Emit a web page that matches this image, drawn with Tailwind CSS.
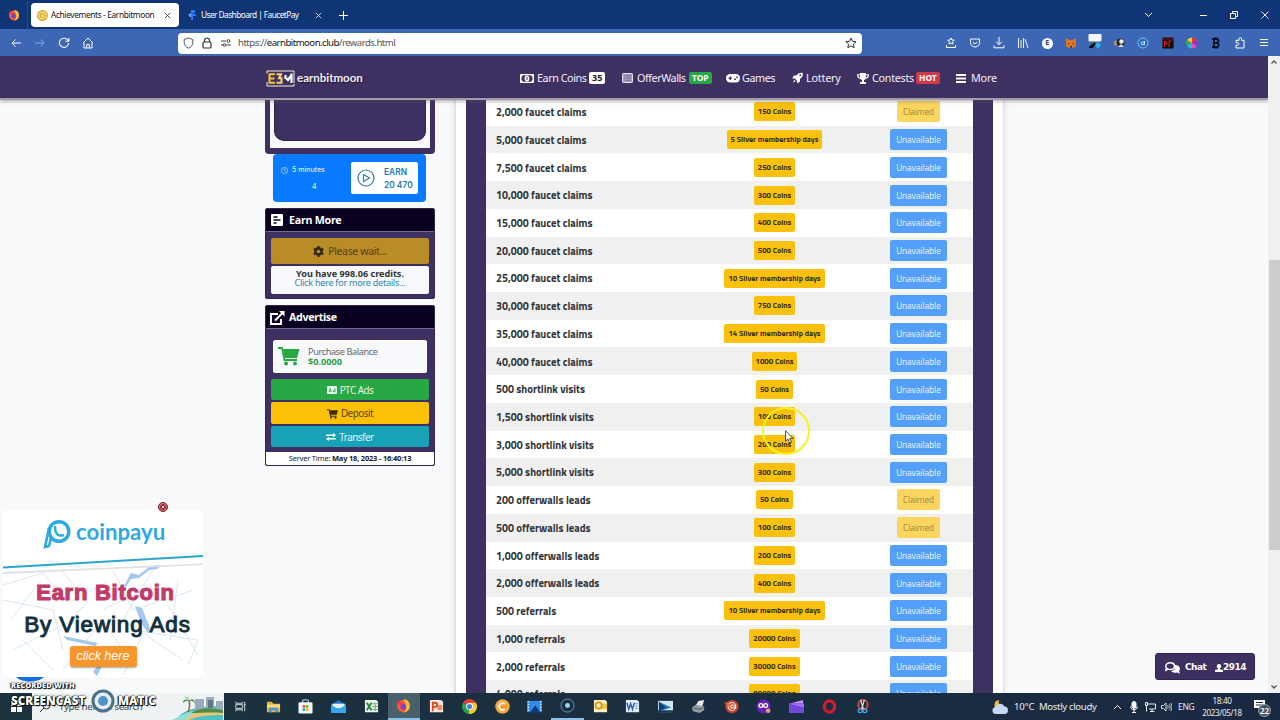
<!DOCTYPE html>
<html lang="en">
<head>
    <meta charset="UTF-8">
    <meta name="viewport" content="width=device-width, initial-scale=1.0">
    <title>Achievements - Earnbitmoon</title>
    <script src="https://cdn.jsdelivr.net/npm/@tailwindcss/browser@4"></script>
</head>
<body class="w-[1280px] h-[720px] overflow-hidden flex flex-col relative font-['Noto_Sans',sans-serif] text-[#333] bg-[#f8f9fb]">

    <!-- Tab bar -->
    <div class="h-[29px] shrink-0 bg-[#103577] flex items-center pt-px text-white text-[8.3px]">
        <div class="w-[28px] h-full border-r border-[#2b4b86] flex items-center justify-center">
            <svg class="w-3 h-3" viewBox="0 0 24 24"><circle cx="12" cy="13" r="10" fill="#ff5a36"/><path d="M12 3c5-3 11 4 10 11-1 5-5 9-10 9 6-4 6-12 0-20z" fill="#ffbd3e"/><path d="M2 9l2-5 4 3 6 2-3 3z" fill="#f53a50"/><circle cx="11.500" cy="14" r="4.500" fill="#7047c6"/></svg>
        </div>
        <div class="ml-[3px] w-[148px] h-6 bg-white rounded-sm flex items-center text-[#15141a] pl-1.5">
            <svg class="w-[11px] h-[11px]" viewBox="0 0 12 12"><circle cx="6" cy="6" r="6" fill="#d9b13b"/><circle cx="6" cy="6" r="3.800" fill="none" stroke="#fbe9a0"/><path d="M5 4h2v4H5z" fill="#f6df8e"/></svg>
            <span class="ml-[3px] w-[105px] whitespace-nowrap tracking-[-0.35px]">Achievements - Earnbitmoon</span>
            <svg class="ml-2 w-[7px] h-[7px] shrink-0" viewBox="0 0 8 8" stroke="#333" fill="none"><path d="M1 1l6 6M7 1L1 7"/></svg>
        </div>
        <svg class="ml-[9px] w-[9px] h-[10px]" viewBox="0 0 9 10"><path d="M3 0h4v3H5v1h3v2H5v4H3V7H1V4h2z" fill="#2b78f5"/><path d="M0 5l3-2v4z" fill="#60a5ff"/></svg>
        <span class="ml-[4px] w-[98px] whitespace-nowrap tracking-[-0.55px]">User Dashboard | FaucetPay</span>
        <svg class="ml-[16px] w-[7px] h-[7px]" viewBox="0 0 8 8" stroke="#dfe8fa" fill="none"><path d="M1 1l6 6M7 1L1 7"/></svg>
        <svg class="ml-[17px] w-[9px] h-[9px]" viewBox="0 0 9 9" stroke="#fff" fill="none"><path d="M4.500 0v9M0 4.500h9"/></svg>
        <div class="ml-auto flex items-center">
            <svg class="w-[9px] h-[6px] mr-[47px]" viewBox="0 0 9 6" stroke="#fff" fill="none"><path d="M1 1l3.500 3.500L8 1"/></svg>
            <svg class="w-[7px] h-[7px] mr-[23px]" viewBox="0 0 7 7" stroke="#fff" fill="none"><path d="M0 3.500h7"/></svg>
            <svg class="w-[8px] h-[8px] mr-[23px]" viewBox="0 0 8 8" stroke="#fff" fill="none"><path d="M.5 2.500h5v5h-5zM2.500 2V.5h5v5H6"/></svg>
            <svg class="w-[8px] h-[8px] mr-[11px]" viewBox="0 0 8 8" stroke="#fff" fill="none" stroke-width=".9"><path d="M.5.5l7 7M7.500.5l-7 7"/></svg>
        </div>
    </div>

    <!-- Address bar -->
    <div class="h-[27px] shrink-0 bg-[#3d66b4] flex items-center pt-px">
        <svg class="ml-[10px] w-3 h-3" viewBox="0 0 12 12" stroke="#fff" fill="none"><path d="M11 6H2M5.500 2.500L2 6l3.500 3.500"/></svg>
        <svg class="ml-[12px] w-3 h-3" viewBox="0 0 12 12" stroke="#8aa6da" fill="none"><path d="M1 6h9M6.500 2.500L10 6 6.500 9.500"/></svg>
        <svg class="ml-[12px] w-3 h-3" viewBox="0 0 12 12" stroke="#fff" fill="none" stroke-width="1.100"><path d="M10 3.500A4.600 4.600 0 1 0 10.600 6M10.800 1v3.300H7.500"/></svg>
        <svg class="ml-[12px] w-3 h-3" viewBox="0 0 12 12" stroke="#fff" fill="none"><path d="M1 6l5-5 5 5M2 5.500V11h8V5.500M4.700 11V7.500h2.600V11"/></svg>
        <div class="ml-[84px] w-[684px] h-[21px] bg-white rounded-sm flex items-center text-[9.6px] text-[#555]">
            <svg class="ml-[5px] w-[11px] h-[12px]" viewBox="0 0 11 12" stroke="#555" fill="none"><path d="M5.500 1l4.300 1.500v3c0 2.700-1.700 4.500-4.300 5.700C2.900 10 1.200 8.200 1.200 5.500v-3z"/></svg>
            <svg class="ml-[8px] w-[10px] h-[12px]" viewBox="0 0 10 12" stroke="#333" fill="none" stroke-width="1.200"><rect x="1" y="5" width="8" height="6" rx="1"/><path d="M2.500 5V3.500a2.500 2.500 0 0 1 5 0V5"/></svg>
            <svg class="ml-[9px] w-[10px] h-[8px]" viewBox="0 0 10 8" stroke="#444" fill="none"><path d="M0 2h5M5 6h5M0 6h2"/><circle cx="7.500" cy="2" r="1.400"/><circle cx="3.300" cy="6" r="1.300"/></svg>
            <span class="ml-[7px] pt-px whitespace-nowrap tracking-[-0.53px]">https://<span class="text-[#111]">earnbitmoon.club</span>/rewards.html</span>
            <svg class="ml-auto mr-[5px] w-[12px] h-[12px]" viewBox="0 0 12 12" stroke="#333" fill="none"><path d="M6 1l1.500 3.300 3.600.4-2.700 2.400.8 3.600L6 8.900l-3.200 1.800.8-3.600L.9 4.700l3.600-.4z"/></svg>
        </div>
        <div class="ml-auto mr-1 flex [&>div]:w-[24.1px] [&>div]:flex [&>div]:items-center [&>div]:justify-center [&_svg]:w-3 [&_svg]:h-3">
            <div><svg viewBox="0 0 12 12" stroke="#fff" fill="none"><path d="M6 1l1 2 2.300.3-1.700 1.500.4 2.200-2-1-2 1 .4-2.200-1.700-1.500L5 3zM1.500 8v2.500h9V8"/></svg></div>
            <div><svg viewBox="0 0 12 12" stroke="#fff" fill="none"><path d="M1.500 2h9v3.500a4.500 4.500 0 0 1-9 0zM3.800 5L6 7l2.200-2"/></svg></div>
            <div><svg viewBox="0 0 12 12" stroke="#fff" fill="none"><path d="M6 0v7.500M3 4.700l3 3 3-3M1 8.500v2.300h10V8.500"/></svg></div>
            <div><svg viewBox="0 0 12 12" stroke="#fff" fill="none" stroke-width=".9"><path d="M1.500 1v10M4 3v8M6.500 1v10M8 2l3 9"/></svg></div>
            <div><span class="w-[11px] h-[11px] rounded-full bg-white text-[#345] text-[7px] font-bold flex items-center justify-center">E</span></div>
            <div><svg viewBox="0 0 12 12"><path d="M.5 1l4 2h3l4-2-.8 5 .5 3-2.700 2-1.500-.8H5l-1.500.8L.8 9l.5-3z" fill="#e1772b"/><path d="M3 6l2 1-1.500.8zM9 6L7 7l1.500.8zM5 9h2v1.500H5z" fill="#5b3022"/></svg></div>
            <div><svg class="overflow-visible" viewBox="0 0 12 12"><rect x="-.5" y="-3" width="13" height="7.500" rx="1" fill="#f5f7fb"/><path d="M0 10l5-5 2 2-3 4H0z" fill="#111"/><path d="M2 4.500h3L4 7z" fill="#35a83a"/><path d="M6 8l3-3 3 3-3 4z" fill="#23b7ea"/></svg></div>
            <div><svg viewBox="0 0 12 12"><circle cx="3.500" cy="6" r="2.600" fill="#b59b6f"/><circle cx="7.500" cy="5.500" r="4" fill="#2b2b2f"/><circle cx="8.500" cy="4.500" r="2.200" fill="#eee"/><path d="M5 10l3-3 3 3z" fill="#ddd"/></svg></div>
            <div><svg viewBox="0 0 12 12" fill="none" stroke="#6cc2ff"><circle cx="6" cy="6" r="5"/><circle cx="6" cy="6" r="3.300" fill="#1c67c9" stroke="none"/><circle cx="5.700" cy="6.300" r="1.500" stroke="#fff" stroke-width=".8"/><path d="M7.500 4v4" stroke="#fff" stroke-width=".8"/></svg></div>
            <div><svg viewBox="0 0 12 12"><rect x=".5" y=".5" width="11" height="11" fill="#170808"/><path d="M2.500 10V4l2.500 1v2H3M7 10V4h2.500" stroke="#e2261f" fill="none"/><path d="M1 2h10" stroke="#a11" stroke-width=".7"/></svg></div>
            <div><svg viewBox="0 0 12 12"><path d="M6 6V.5A5.500 5.500 0 0 1 10.800 3z" fill="#e33"/><path d="M6 6l4.800-3a5.500 5.500 0 0 1 0 6z" fill="#a02bd0"/><path d="M6 6l4.800 3A5.500 5.500 0 0 1 6 11.500z" fill="#e94bbd"/><path d="M6 6v5.500A5.500 5.500 0 0 1 1.200 9z" fill="#25b7f0"/><path d="M6 6L1.200 9a5.500 5.500 0 0 1 0-6z" fill="#31b53b"/><path d="M6 6L1.200 3A5.500 5.500 0 0 1 6 .5z" fill="#f1cf24"/></svg></div>
            <div><svg viewBox="0 0 12 12" fill="none" stroke="#0b1222" stroke-width="1.800"><path d="M2 2h4.500a1.900 1.900 0 0 1 0 3.800H4M6.500 5.800a2.100 2.100 0 0 1 0 4.200H2M4 2v8"/><path d="M5 0v2M7 0v2M5 10v2M7 10v2" stroke-width="1"/></svg></div>
            <div><svg viewBox="0 0 12 12" fill="none" stroke="#fff"><path d="M2 11V8h1.500a1.200 1.200 0 0 0 0-2.400H2V3.300h3V2a1.300 1.300 0 0 1 2.600 0v1.300H10V11z"/></svg></div>
            <div><svg viewBox="0 0 12 12" fill="none" stroke="#fff"><path d="M2 2.500h8M2 5.500h8M2 8.500h8"/></svg></div>
        </div>
    </div>

    <!-- Page -->
    <div class="h-[637px] shrink-0 flex relative">
        <div class="w-[1268px] flex flex-col overflow-hidden">
            <nav class="h-[42px] pt-[2px] shrink-0 bg-[#3f3062] shadow-[0_2px_0_#a29ba8,0_3px_4px_#5558] relative z-10 flex items-center text-[10.8px] tracking-[-0.45px] text-[#f3effa] pl-[266px] whitespace-nowrap">
                <svg class="w-[29px] h-[17px]" viewBox="0 0 29 17" fill="none"><path d="M1 3.500V1h27v12M1 12v4h27v-2" stroke="#f4efe0"/><path d="M9 4.200H3.500v8.600H9M3.500 8.500h5" stroke="#f8c33c" stroke-width="2"/><path d="M10.500 4.200H15L13 8.300h2.500v4.500h-5" stroke="#f8d46c" stroke-width="2"/><path d="M19.500 5v4M25.500 3.500V13M19 7l3 3 4-6" stroke="#fff" stroke-width="2.200"/></svg>
                <span class="ml-[2px] w-[66px] font-['Lato',sans-serif] font-bold text-[11.5px] tracking-[0px] [text-shadow:1px_1px_1px_#0008]">earnbitmoon</span>
                <div class="ml-[157px] w-[102px] flex items-center">
                    <svg class="w-[14px] h-[9px] mr-[3px]" viewBox="0 0 14 9"><rect width="14" height="9" rx=".8" fill="#fff"/><path d="M3 1.200h8L12.500 3v3L11 7.800H3L1.500 6V3z" fill="#3f3062"/><ellipse cx="7" cy="4.500" rx="2.400" ry="3" fill="#fff"/><path d="M7 3v3" stroke="#3f3062"/></svg>
                    <span class="w-[49px]">Earn Coins</span><span class="ml-[3px] h-[12px] px-[3px] rounded-[2px] bg-white text-[#222] text-[9px] font-bold tracking-normal leading-[12px]">35</span>
                </div>
                <div class="w-[104px] flex items-center">
                    <svg class="w-[11px] h-[10px] mr-[4px]" viewBox="0 0 11 10"><rect x=".5" y=".5" width="10" height="9" rx=".8" fill="#a69db9" stroke="#e6e1ee"/><path d="M2 2.700h1M4 2.700h5M2 5h1M4 5h5M2 7.300h1M4 7.300h5" stroke="#6c5f88" stroke-width=".8"/></svg>
                    <span class="w-[49px]">OfferWalls</span><span class="ml-[3px] h-[12px] px-[3px] rounded-[2px] bg-[#28a745] text-white text-[8.4px] font-bold tracking-normal leading-[12px]">TOP</span>
                </div>
                <div class="w-[66px] flex items-center">
                    <svg class="w-[14px] h-[9px] mr-[2px]" viewBox="0 0 14 9"><rect width="14" height="8.500" rx="4.200" fill="#fff"/><path d="M2.500 4.200h3.600M4.300 2.400V6" stroke="#3f3062" stroke-width="1.200"/><circle cx="9" cy="5.200" r=".9" fill="#3f3062"/><circle cx="11" cy="3.300" r=".9" fill="#3f3062"/></svg>
                    <span>Games</span>
                </div>
                <div class="w-[65px] flex items-center">
                    <svg class="w-[11px] h-[12px] mr-[3px]" viewBox="0 0 12 12" fill="#fff"><path d="M11.700.3C8.500-.2 6.300 1 4.800 3.400H2L.3 6.500l2.800.1 2.400 2.400.1 2.700L8.700 10V7.200C11 5.700 12.200 3.500 11.700.3z"/><circle cx="9" cy="3" r="1" fill="#3f3062"/><path d="M2.500 8L1 11l3-1.500z"/></svg>
                    <span class="tracking-[-0.2px]">Lottery</span>
                </div>
                <div class="w-[99px] flex items-center">
                    <svg class="w-[12px] h-[11px] mr-[3px]" viewBox="0 0 12 11" fill="#fff"><path d="M3 0h6v1.200h3c0 3-1.200 4.500-3.500 4.700C8 6.600 7.500 7 7 7.200V9h2v2H3V9h2V7.200C4.500 7 4 6.600 3.500 5.900 1.200 5.700 0 4.200 0 1.200h3zM1.200 2.300c.2 1.300.8 2 1.900 2.300L2.900 2.300zM10.800 2.300H9.100l-.2 2.300c1.100-.3 1.700-1 1.900-2.300z" fill-rule="evenodd"/></svg>
                    <span class="w-[41px] tracking-[-0.3px]">Contests</span><span class="ml-[3px] h-[12px] px-[3px] rounded-[2px] bg-[#d13a4b] text-white text-[8.4px] font-bold tracking-normal leading-[12px]">HOT</span>
                </div>
                <svg class="w-[10px] h-[9px] mr-[5px]" viewBox="0 0 10 9" stroke="#fff" stroke-width="1.800"><path d="M0 1h10M0 4.500h10M0 8h10"/></svg>
                <span class="tracking-[-0.2px]">More</span>
            </nav>

            <div class="flex-1 min-h-0 flex pl-[265px]">
                <!-- Sidebar -->
                <aside class="w-[170px] shrink-0 flex flex-col">
                    <div class="h-[56px] shrink-0 bg-[#3f3062] px-[5px] pb-[6px] rounded-b-sm">
                        <div class="h-full bg-[#f8f8fc] px-1 pb-[7px]"><div class="h-full bg-[#3f3062] rounded-b-[10px] border border-t-0 border-[#30224f]"></div></div>
                    </div>
                    <div class="h-12 shrink-0 mx-2 w-[153px] bg-[#087aff] rounded-[4px] flex font-['Inter',sans-serif] text-[7px] font-medium text-[#d9ebff]">
                        <div class="w-[78px] pt-[11px] pl-2">
                            <div class="flex items-center gap-[4px] whitespace-nowrap"><svg class="w-[7px] h-[7px]" viewBox="0 0 8 8" fill="none" stroke="#cfe5ff" stroke-width=".8"><circle cx="4" cy="4" r="3.500"/><path d="M4 1.800V4l1.500 1"/></svg>5 minutes</div>
                            <div class="pl-[31px] mt-[6px]">4</div>
                        </div>
                        <div class="w-[67px] h-[32px] mt-[8px] bg-white rounded-[2px] flex items-center text-[#2379b4] font-semibold text-[8.4px] leading-[13px]">
                            <svg class="ml-[6px] w-[18px] h-[18px] mr-[9px]" viewBox="0 0 18 18" fill="none" stroke="#2d80ac" stroke-width="1.200"><circle cx="9" cy="9" r="8"/><path d="M6.500 5.500v7l6-3.500z"/></svg>
                            <div class="whitespace-nowrap pt-px">EARN<br>20 470</div>
                        </div>
                    </div>

                    <div class="mt-[6px] h-[91px] shrink-0 bg-[#3f3062] rounded-[2px] border border-[#33264f] flex flex-col">
                        <div class="h-[23px] bg-[#090020] border-b border-[#776b92] flex items-center text-white font-bold text-[10.7px] tracking-[-0.25px]">
                            <svg class="ml-[5px] w-[12px] h-[12px] mr-[6px]" viewBox="0 0 12 12"><rect width="12" height="12" rx="1" fill="#fff"/><path d="M2.500 3h4M2.500 6h7M2.500 9h3" stroke="#090020" stroke-width="1.400"/></svg>
                            Earn More
                        </div>
                        <div class="mt-[6px] mx-[5px] h-[26px] pt-px bg-[#b98c27] rounded-[2px] flex items-center justify-center gap-[4px] text-[10.6px] tracking-[-0.4px] text-[#55421c]">
                            <svg class="w-[11px] h-[11px]" viewBox="0 0 10 10"><circle cx="5" cy="5" r="2.800" fill="none" stroke="#352917" stroke-width="2.400"/><path d="M5 0v2M5 8v2M.7 2.500l1.700 1M7.600 6.500l1.700 1M.7 7.500l1.700-1M7.600 3.500l1.700-1" stroke="#352917" stroke-width="2"/></svg>
                            Please wait...
                        </div>
                        <div class="mt-[2px] mx-[5px] h-[28px] bg-[#f8f9fc] rounded-[2px] text-center text-[9.1px] leading-[9.5px] pt-[2.5px] whitespace-nowrap">
                            <b>You have 998.06 credits.</b><br><span class="text-[#3186b0] tracking-[-0.27px]">Click here for more details...</span>
                        </div>
                    </div>

                    <div class="mt-[6px] h-[161px] shrink-0 bg-[#3f3062] rounded-[2px] border border-[#33264f] flex flex-col">
                        <div class="h-[23px] bg-[#090020] border-b border-[#776b92] flex items-center pt-px text-white font-bold text-[10.7px] tracking-[-0.35px]">
                            <svg class="ml-[4px] w-[15px] h-[14px] mr-[4px]" viewBox="0 0 15 14" fill="none" stroke="#fff" stroke-width="1.900"><path d="M8 3H1v10h10V8M5 9.500L12.500 2"/><path d="M9 0h5.500v5.500z" fill="#fff" stroke="none"/></svg>
                            Advertise
                        </div>
                        <div class="mt-[11px] ml-[7px] w-[154px] h-[33px] bg-[#f8f9fc] border border-white rounded-[2px] flex items-center text-[9.2px] leading-[9.5px] text-[#666] shrink-0">
                            <svg class="ml-[4px] w-[22px] h-[19px] mr-[8px]" viewBox="0 0 22 19"><path d="M0 1h4l2.500 12H19" fill="none" stroke="#28a745" stroke-width="1.800"/><path d="M5 2h16.500L19 11H6.500z" fill="#28a745"/><circle cx="8" cy="16.500" r="2" fill="#28a745"/><circle cx="17" cy="16.500" r="2" fill="#28a745"/></svg>
                            <div class="whitespace-nowrap"><span class="tracking-[-0.4px]">Purchase Balance</span><br><b class="text-[#2a9f47]">$0.0000</b></div>
                        </div>
                        <div class="mt-[6px] mx-[5px] flex flex-col gap-[2px] text-[9.9px] tracking-[-0.5px] [&>div]:h-[21.4px] [&>div]:rounded-[2px] [&>div]:flex [&>div]:items-center [&>div]:justify-center [&>div]:gap-[3px] [&>div]:pt-px">
                            <div class="bg-[#28a745] text-[#e3f6e8]"><svg class="w-[10px] h-[8px]" viewBox="0 0 10 8"><rect width="10" height="8" rx="1" fill="#e8fbec"/><path d="M2 6l1.200-3.500L4.400 6M2.400 5h1.700M8 2v4M8 4.500H6.400V6H8" stroke="#28a745" stroke-width=".8" fill="none"/></svg>PTC Ads</div>
                            <div class="bg-[#fcc107] text-[#5a4508]"><svg class="w-[11px] h-[10px]" viewBox="0 0 22 19" fill="#3b300d"><path d="M0 0h5l.5 2H22l-2.500 9H7.500l.4 2H19v2H6L3.500 2H0z"/><circle cx="8" cy="17" r="2"/><circle cx="17" cy="17" r="2"/></svg>Deposit</div>
                            <div class="bg-[#17a2b8] text-[#e0f6fa]"><svg class="w-[10px] h-[8px]" viewBox="0 0 10 8" fill="#fff"><path d="M0 1.500h7V0l3 2.300-3 2.200V3H0zM10 5H3V3.700L0 6l3 2V6.500h7z"/></svg>Transfer</div>
                        </div>
                        <div class="mt-auto h-[13px] bg-white rounded-b-[2px] text-center text-[7.5px] tracking-[-0.2px] leading-[12px] text-[#222] whitespace-nowrap">Server Time: <b>May 18, 2023 - 16:40:13</b></div>
                    </div>
                </aside>

                <!-- Achievements -->
                <main class="ml-[20px] w-[549px] shrink-0 bg-white border-x border-[#dcdee2] shadow-[0_0_5px_#0002] px-[10px]">
                    <div class="h-full bg-[#3f3062] px-[20px]">
                        <div id="achievements" class="bg-white font-['Titillium_Web','Open_Sans',sans-serif]"></div>
                    </div>
                </main>
            </div>
        </div>

        <!-- Scrollbar -->
        <div class="w-3 bg-[#f0f0f1] flex flex-col items-center">
            <svg class="mt-[4px] w-[6px] h-[4px]" viewBox="0 0 6 4" stroke="#555" stroke-width="1.300" fill="none"><path d="M.5 3.500L3 1l2.500 2.500"/></svg>
            <div class="mt-[196px] w-[11px] h-[290px] bg-[#cdcdcd]"></div>
            <svg class="mt-auto mb-[4px] w-[6px] h-[4px]" viewBox="0 0 6 4" stroke="#555" stroke-width="1.300" fill="none"><path d="M.5.5L3 3 5.500.5"/></svg>
        </div>

        <div class="absolute left-[1155px] top-[597px] w-[100px] h-[27px] pt-[2px] rounded-[3px] bg-[#3f3062] border border-[#31234f] text-white flex items-center font-['DejaVu_Sans',sans-serif] font-bold text-[9px] tracking-[-0.5px]">
            <svg class="ml-[9px] w-[15px] h-[12px] mr-[5px]" viewBox="0 0 15 12" fill="#fff"><path d="M9 3c4-.5 6 1.500 6 3.800 0 1-.4 1.700-1 2.300l1 2.600-3-1.200c-3 .7-5-.2-5.800-1.500C10 8.500 11 6 9 3z"/><path d="M5.200.8c2.700 0 4.300 1.400 4.300 3.400S7.900 7.500 5.200 7.500c-.9 0-1.600-.2-2.200-.4L.9 8.200l.7-2.100C1 5.500.8 5 .8 4.200.8 2.200 2.500.8 5.200.8z" fill="none" stroke="#fff" stroke-width="1.500"/></svg>
            <span class="w-[21px]">Chat</span>
            <svg class="ml-[9px] w-[8px] h-[8px]" viewBox="0 0 8 8" fill="#fff"><circle cx="4" cy="2.300" r="2.200"/><path d="M3 4h2v1.200l3 .8v2H0V6l3-.8z"/></svg>
            <span>2914</span>
        </div>

        <!-- Banner ad -->
        <div class="absolute left-[3px] top-[454px] w-[200px] h-[167px] bg-white overflow-hidden">
            <svg class="absolute inset-0 w-full h-full" viewBox="0 0 200 167" fill="none">
                <g stroke="#c6dcea" stroke-width=".7"><path d="M0 75l40-12 25 30 38-20M8 110l30-40M60 62l25 30-30 30M0 90l50 10 10 40M110 60l20 40 60-20M150 60l-30 50 60 40M165 95l30 50M60 160l40-50 30 45M10 140l50-25M130 120l65 10-10 25M20 130l30 30M100 100l40-20M175 70l-8 60M140 125l-20 40"/></g>
                <path d="M120 78l8-15 8 2 16-13 12 0-10 7-8 1-10 8-8 1-5 8zM132 96l7 2 8 20-2 5-7-10zM60 126l35 7-3 3-28-6zM90 162l8-12 3 2-7 14z" fill="#a3caee"/>
                <path d="M0 0h200v52L0 63z" fill="#fff"/>
                <path d="M0 59l200-11.500v6L0 62z" fill="#fff"/>
                <path d="M0 62l200-8.500v1.500L0 64z" fill="#dde1e4"/>
                <path d="M0 57.500L200 46" stroke="#2aa7cc" stroke-width="1.800"/>
                <g stroke="#2eaae0"><circle cx="56" cy="21.500" r="9.800" stroke-width="3.500"/><path d="M46 18l-4 19 4-1 2-8" stroke-width="2.600"/><path d="M52 16c0 8 3 11 9 9" stroke-width="2.500"/></g>
            </svg>
            <div class="relative flex flex-col items-center text-center whitespace-nowrap">
                <div class="h-[44px] self-start ml-[73px] font-['Lato',sans-serif] text-[22.2px] leading-[44px] font-bold text-[#2eaae0]">coinpayu</div>
                <div class="mt-[25px] ml-[5px] h-[28px] leading-[28px] font-['Liberation_Sans',sans-serif] text-[22px] tracking-[0.75px] font-bold text-[#c33b68] [-webkit-text-stroke:1.100px_#c33b68]">Earn Bitcoin</div>
                <div class="mt-[4px] ml-[9px] h-[28px] leading-[28px] font-['Liberation_Sans',sans-serif] text-[22.5px] tracking-[0.85px] text-[#12303e] [-webkit-text-stroke:1px_#12303e]">By Viewing Ads</div>
                <div class="mt-[7px] w-[67px] h-[21px] rounded-[3px] bg-[#f6962c] shadow-[0_1px_2px_#0005] text-white italic font-['Liberation_Sans',sans-serif] text-[12.5px] leading-[21px]">click here</div>
            </div>
        </div>
        <svg class="absolute left-[158px] top-[446px] w-[10px] h-[10px]" viewBox="0 0 10 10"><circle cx="5" cy="5" r="4.500" fill="#b01c25" stroke="#652528"/><circle cx="5" cy="5" r="3.600" fill="none" stroke="#f4caca" stroke-width=".6"/><path d="M3.700 3.700l2.600 2.600M6.300 3.700L3.700 6.300" stroke="#fff"/></svg>
        <svg class="absolute left-[16px] top-[620px] w-[28px] h-[6px]" viewBox="0 0 28 6"><path d="M0 1h28C22 7 6 7 0 1z" fill="#176de0"/></svg>
    </div>

    <!-- Taskbar -->
    <div class="h-[27px] shrink-0 bg-linear-to-r from-[#1b333e] to-[#1a2942] flex items-center text-white">
        <div class="w-8 flex justify-center"><svg class="w-[11px] h-[11px]" viewBox="0 0 11 11" fill="#fff"><path d="M0 0h5v5H0zM6 0h5v5H6zM0 6h5v5H0zM6 6h5v5H6z"/></svg></div>
        <div class="w-[192px] h-full bg-[#eff2f3] flex items-center text-[9.8px] text-[#444]">
            <svg class="ml-[8px] w-[11px] h-[11px]" viewBox="0 0 11 11" fill="none" stroke="#333"><circle cx="6.500" cy="4.500" r="3.500"/><path d="M4 7l-4 4"/></svg>
            <span class="ml-[8px] w-[86px] whitespace-nowrap tracking-[-0.35px] pt-px">Type here to search</span>
            <svg class="ml-auto w-[53px] h-[27px]" viewBox="0 0 53 27"><path d="M6 27c4-11 22-14 46-14v14z" fill="#4fbfc4"/><path d="M0 27c8-2 12-8 24-9l-6 9z" fill="#92dfda"/><path d="M24 6h9v12h-9zM35 4h8v14h-8zM45 8h7v10h-7z" fill="#9aaab8"/><path d="M37 7h5v8h-5z" fill="#60778b"/><path d="M14 27c8-9 20-11 38-9v4c-12 0-26 1-34 5z" fill="#e6c77a"/><path d="M20 20c8-6 22-5 32-3v3c-12-1-22 0-32 0z" fill="#4f8a45"/><path d="M17 19c2-4 2-8 1-12" stroke="#8b6337" stroke-width="1.500" fill="none"/><path d="M18 8c-4-3-6-1-6 2 2-2 4-2 6-2 2-1 5 0 6 3 0-5-3-6-6-3 0-3-2-5-5-4 3 0 4 2 5 4z" fill="#4e9a50"/></svg>
        </div>
        <div class="flex h-full [&>div]:w-[32.72px] [&>div]:flex [&>div]:items-center [&>div]:justify-center [&_svg]:w-[15px] [&_svg]:h-[15px]">
            <div><svg viewBox="0 0 16 16" fill="none" stroke="#dce4e8"><path d="M3 3v1.500h7V3M3 6h7v4H3zM3 13v-1.500h7V13M12.500 3v10M11.500 6h2"/></svg></div>
            <div><svg viewBox="0 0 16 16"><path d="M1 3h5l2 2h7v9H1z" fill="#e9b339"/><path d="M1 6h14v4H1z" fill="#ffdc75"/><path d="M3 9h10v5h-3v-2H6v2H3z" fill="#4b9ad6"/></svg></div>
            <div><svg viewBox="0 0 16 16"><path d="M5 4V1h6v3" fill="none" stroke="#d8eef8"/><rect x=".5" y="3.500" width="15" height="12" rx="1.500" fill="#f5f8fa"/><path d="M5 6.500h2.700v2.700H5z" fill="#f25022"/><path d="M8.400 6.500h2.700v2.700H8.400z" fill="#7fba00"/><path d="M5 9.900h2.700v2.700H5z" fill="#00a4ef"/><path d="M8.400 9.900h2.700v2.700H8.400z" fill="#ffb900"/></svg></div>
            <div><svg viewBox="0 0 16 16"><path d="M0 6l8-5 8 5v9H0z" fill="#1678cb"/><path d="M1.500 5h13v5h-13z" fill="#e6f4fc"/><path d="M0 6l8 5 8-5v9H0z" fill="#35a7ee"/></svg></div>
            <div><svg viewBox="0 0 16 16"><path d="M1 1h12l2 2v11H1z" fill="#e8f4e6"/><path d="M9 5h6M9 8h6M9 11h6M12 4v9" stroke="#67ad6d"/><path d="M3 4l5 8M8 4l-5 8" stroke="#2c8840" stroke-width="2"/></svg></div>
            <div class="bg-[#4a606a] border-b-2 border-[#8cc2ed]"><svg viewBox="0 0 24 24"><circle cx="12" cy="13" r="10" fill="#ff5a36"/><path d="M12 3c5-3 11 4 10 11-1 5-5 9-10 9 6-4 6-12 0-20z" fill="#ffbd3e"/><path d="M2 9l2-5 4 3 6 2-3 3z" fill="#f53a50"/><circle cx="11.500" cy="14" r="4.500" fill="#7047c6"/></svg></div>
            <div><svg viewBox="0 0 16 16"><path d="M1 1h12l2 2v11H1z" fill="#fce8df"/><circle cx="11.500" cy="9" r="3" fill="#ed8d62"/><path d="M4 13V4h2.500a2.200 2.200 0 0 1 0 4.500H4" stroke="#d14925" stroke-width="1.900" fill="none"/></svg></div>
            <div><svg viewBox="0 0 16 16"><path d="M8 8L1.100 4a8 8 0 0 1 13.800 0z" fill="#e43e30"/><path d="M8 8H8l-6.900-4a8 8 0 0 0 6.400 12L11 9z" fill="#2ba24c"/><path d="M8 8l-.5 8A8 8 0 0 0 14.900 4H8z" fill="#fcc934"/><circle cx="8" cy="8" r="3.700" fill="#fff"/><circle cx="8" cy="8" r="2.800" fill="#4285f4"/></svg></div>
            <div><svg viewBox="0 0 16 16" fill="none"><circle cx="8" cy="8" r="7.800" fill="#f49b2c"/><circle cx="8" cy="8" r="5.800" stroke="#ffd18d" stroke-width=".7"/><path d="M10.500 5.500a3.500 3.500 0 1 0 0 5" stroke="#fff" stroke-width="1.800"/></svg></div>
            <div><svg viewBox="0 0 16 16"><path d="M0 2h16v12H0z" fill="#2f8ce4"/><path d="M3 14l6-7 5 7z" fill="#103a82"/><path d="M1.500 2v12M14.500 2v12" stroke="#d9ecff" stroke-width="1.500" stroke-dasharray="1.500 1.500"/></svg></div>
            <div class="border-b-2 border-[#8cc2ed]"><svg viewBox="0 0 16 16" fill="none"><circle cx="8" cy="8" r="7" stroke="#5a9fb8"/><circle cx="8" cy="8" r="2.600" fill="#98d6ed"/></svg></div>
            <div><svg viewBox="0 0 16 16"><path d="M1 1h12l2 2v11H1z" fill="#fdf0c4"/><path d="M9 5h6v6H9z" fill="#f2c64e"/><circle cx="6" cy="7" r="3.300" fill="none" stroke="#d89412" stroke-width="1.900"/></svg></div>
            <div><svg viewBox="0 0 16 16"><path d="M1 1h12l2 2v11H1z" fill="#e4effa"/><path d="M11 5h3M11 7.500h3M11 10h3" stroke="#5c92d1"/><path d="M2 4l2 7 2-6 2 6 2-7" stroke="#2b63b0" stroke-width="1.600" fill="none"/></svg></div>
            <div><svg viewBox="0 0 16 16"><path d="M0 2h16v12H0z" fill="#d2e7f0"/><path d="M1 3l13 6-13 4z" fill="#1d73b8"/><path d="M0 12h16v2H0z" fill="#183b60"/><path d="M1 3l7 6-7 4z" fill="#113a6b"/></svg></div>
            <div><svg viewBox="0 0 16 16"><path d="M5 7l3-5 6-1-2 7z" fill="#eceff1"/><path d="M1 9l4-3 9 2v4l-5 3-7-2z" fill="#929ba2"/><path d="M3 10l7 1 3-2" stroke="#4b555c" fill="none"/></svg></div>
            <div><svg viewBox="0 0 16 16"><circle cx="8.500" cy="8" r="7" fill="#c9432c"/><circle cx="8.500" cy="8" r="4.700" fill="#f5e3db"/><path d="M11 6a3 3 0 1 0 0 4M8 8h3" stroke="#d95035" stroke-width="1.600" fill="none"/><path d="M0 3l8 3-4 2z" fill="#e8693c"/></svg></div>
            <div><svg viewBox="0 0 16 16" fill="none"><circle cx="8" cy="8" r="7.500" fill="#6721b8"/><circle cx="5.300" cy="7" r="2" stroke="#fff" stroke-width="1.400"/><circle cx="10.300" cy="7" r="2" stroke="#fff" stroke-width="1.400"/><circle cx="13" cy="12.500" r="2.500" fill="#e99a79"/></svg></div>
            <div><svg viewBox="0 0 16 16"><path d="M0 5l15-4v4z" fill="#c691ff"/><path d="M0 5h16v10H0z" fill="#7147d8"/><path d="M0 5h16v4z" fill="#9c70ef"/></svg></div>
            <div><svg viewBox="0 0 16 16"><ellipse cx="8" cy="8" rx="5.500" ry="6" fill="none" stroke="#d51b2c" stroke-width="3.500"/></svg></div>
            <div><svg viewBox="0 0 16 16" fill="none"><circle cx="8.500" cy="6" r="5" stroke="#b64a2f" stroke-width="2.400"/><path d="M6 1l3 10M10 1L7 11" stroke="#dbe6ed" stroke-width="1.300"/><circle cx="5.500" cy="12.500" r="2" stroke="#48a7e8" stroke-width="1.400"/><circle cx="10.500" cy="12.500" r="2" stroke="#48a7e8" stroke-width="1.400"/></svg></div>
        </div>
        <div class="ml-auto flex items-center text-[9.6px] text-[#e8edf3] whitespace-nowrap pt-px">
            <svg class="w-[17px] h-[15px]" viewBox="0 0 17 15"><path d="M7 0a5 5 0 1 0 5 7C8 7 6 4 7 0z" fill="#f3ba45"/><path d="M4 14a3.500 3.500 0 0 1 0-7 4.500 4.500 0 0 1 8.500-.5A3.800 3.800 0 0 1 13 14z" fill="#c5d9f3"/></svg>
            <span class="ml-[5px] w-[20px] tracking-[-0.2px]">10°C</span>
            <span class="ml-[5px] w-[58px] tracking-[-0.35px]">Mostly cloudy</span>
            <svg class="ml-[16px] w-[9px] h-[6px]" viewBox="0 0 9 6" stroke="#fff" fill="none"><path d="M1 5l3.500-3.500L8 5"/></svg>
            <svg class="ml-[8px] w-[8px] h-[12px]" viewBox="0 0 8 12" fill="none" stroke="#fff"><rect x="2" y=".5" width="4" height="7" rx="2" fill="#fff"/><path d="M.7 5.500c0 4.500 6.600 4.500 6.600 0M4 9v2M2 11.500h4"/></svg>
            <svg class="ml-[7px] w-[11px] h-[10px]" viewBox="0 0 11 10" fill="none" stroke="#fff" stroke-width=".9"><path d="M3 2h7.500v5H4M7 7v2M5 9.500h4.500M.5.5h2v3h-2zM1.500 3.500v6"/></svg>
            <svg class="ml-[5px] w-[11px] h-[10px]" viewBox="0 0 11 10" fill="none" stroke="#fff" stroke-width=".8"><path d="M.5 3.500h2L5 1v8L2.500 6.500h-2zM6.500 3.500c.8 1 .8 2 0 3M8 2.300c1.500 1.700 1.500 3.700 0 5.400M9.500 1c2 2.500 2 5.500 0 8"/></svg>
            <span class="ml-[6px] w-[16px] text-[8.4px] tracking-[-0.2px]">ENG</span>
            <div class="ml-[7px] w-[42px] text-center text-[8.1px] leading-[12px] tracking-[-0.35px]">18:40<br>2023/05/18</div>
            <div class="relative ml-[11px] mr-[8px] w-[18px] h-[15px]">
                <svg class="w-[11px] h-[11px]" viewBox="0 0 11 11"><path d="M0 0h11v8H7l-2 3V8H0z" fill="#fff"/><path d="M2 2.500h7M2 5h7" stroke="#1a2942"/></svg>
                <span class="absolute left-[4px] top-[4px] w-[13px] h-[13px] rounded-full bg-[#46515f] border border-[#9aa3ad] text-white text-[8px] font-semibold leading-[11px] flex justify-center">22</span>
            </div>
        </div>
    </div>

    <!-- Recorder watermark -->
    <div class="absolute left-[11px] top-[681px] font-['Open_Sans',sans-serif] font-extrabold text-white whitespace-nowrap [text-shadow:0_0_2px_#000,1px_1px_1px_#000,-1px_0_1px_#000]">
        <div class="text-[7.4px] tracking-[0.15px] leading-[9px]">RECORDED WITH</div>
        <div class="flex items-center text-[11.5px] leading-[22px] -mt-px">
            <span class="w-[79px] tracking-[0.1px]">SCREENCAST</span>
            <svg class="w-[24px] h-[24px] mx-[1px]" viewBox="0 0 24 24"><circle cx="12" cy="12" r="10" fill="#e8eff4" stroke="#4b7189" stroke-width="3"/><circle cx="12" cy="12" r="5" fill="#4f93c8"/></svg>
            <span class="ml-[2px]">MATIC</span>
        </div>
    </div>

    <!-- Cursor -->
    <div class="absolute left-[762px] top-[407px] w-[48px] h-[48px] rounded-full border-2 border-[#f7f222]"></div>
    <svg class="absolute left-[785px] top-[430px] w-[9px] h-[14px]" viewBox="0 0 9 14"><path d="M.5.7v10.500l2.400-2.200 1.700 4 1.800-.8-1.700-3.800H8z" fill="#fff" stroke="#222" stroke-width=".8"/></svg>

    <script>
        const achievements = [
            ['2,000 faucet claims', '150 Coins', true],
            ['5,000 faucet claims', '5 Silver membership days', false],
            ['7,500 faucet claims', '250 Coins', false],
            ['10,000 faucet claims', '300 Coins', false],
            ['15,000 faucet claims', '400 Coins', false],
            ['20,000 faucet claims', '500 Coins', false],
            ['25,000 faucet claims', '10 Silver membership days', false],
            ['30,000 faucet claims', '750 Coins', false],
            ['35,000 faucet claims', '14 Silver membership days', false],
            ['40,000 faucet claims', '1000 Coins', false],
            ['500 shortlink visits', '50 Coins', false],
            ['1,500 shortlink visits', '100 Coins', false],
            ['3,000 shortlink visits', '200 Coins', false],
            ['5,000 shortlink visits', '300 Coins', false],
            ['200 offerwalls leads', '50 Coins', true],
            ['500 offerwalls leads', '100 Coins', true],
            ['1,000 offerwalls leads', '200 Coins', false],
            ['2,000 offerwalls leads', '400 Coins', false],
            ['500 referrals', '10 Silver membership days', false],
            ['1,000 referrals', '20000 Coins', false],
            ['2,000 referrals', '30000 Coins', false],
            ['4,000 referrals', '80000 Coins', false]
        ];

        document.getElementById('achievements').innerHTML = achievements.map(([name, reward, claimed]) => `
            <div class="h-[27.73px] flex items-center whitespace-nowrap odd:bg-white even:bg-[#f0f0f0]">
                <div class="w-[179px] pl-[10px] pt-[0.6px] text-[10.7px] font-bold text-[#303438]">${name}</div>
                <div class="w-[219px] flex justify-center">
                    <span class="h-[19px] px-[4px] rounded-[2px] bg-[#fac10c] text-[#3a2e10] text-[7.9px] leading-[19px] font-bold">${reward}</span>
                </div>
                <div class="w-[69px] flex justify-center">
                    ${claimed
                        ? '<span class="w-[43px] h-[21px] rounded-[2px] bg-[#fcd55f] text-[#9a8442] text-[9.2px] leading-[22px] text-center">Claimed</span>'
                        : '<span class="w-[57px] h-[21px] rounded-[2px] bg-[#539ffa] text-[#eef5ff] text-[9.2px] leading-[22px] text-center">Unavailable</span>'}
                </div>
            </div>`).join('');
    </script>
</body>
</html>
